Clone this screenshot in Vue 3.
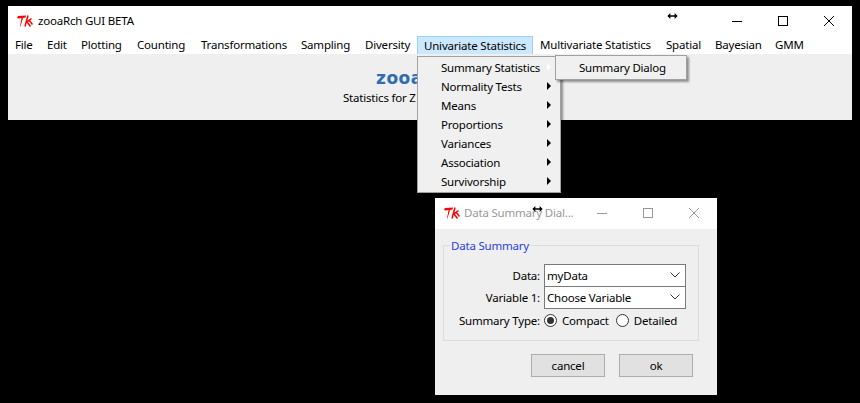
<script setup>
const menus = [
  { label: 'File', width: 32 },
  { label: 'Edit', width: 34 },
  { label: 'Plotting', width: 56 },
  { label: 'Counting', width: 64 },
  { label: 'Transformations', width: 100 },
  { label: 'Sampling', width: 64 },
  { label: 'Diversity', width: 59 },
  { label: 'Univariate Statistics', width: 116, active: true },
  { label: 'Multivariate Statistics', width: 126 },
  { label: 'Spatial', width: 49 },
  { label: 'Bayesian', width: 60 },
  { label: 'GMM', width: 40 }
]
const items = ['Summary Statistics', 'Normality Tests', 'Means', 'Proportions', 'Variances', 'Association', 'Survivorship']
</script>

<template>
  <div class="desktop">
    <section class="window main-window">
      <header class="titlebar">
        <svg class="tk" viewBox="0 0 16 12" width="16" height="12">
          <path d="M0 3L1 1L9 0.5L8.5 2.5L6 3L3.5 11.5L3 11.5L4.5 3L1.5 3.5Z" fill="#f00" />
          <path d="M11 0.5L8 11.5M14.5 3.5L10 7L13.5 11.5M12 5L15.5 9.5" stroke="#f00" stroke-width="1.5" fill="none" />
        </svg>
        <span class="title">zooaRch GUI BETA</span>
        <div class="controls">
          <svg width="12" height="12" viewBox="0 0 12 12"><path d="M1 6.5H11" stroke="#000" /></svg>
          <svg width="12" height="12" viewBox="0 0 12 12"><rect x="1.5" y="1.5" width="9" height="9" fill="none" stroke="#000" /></svg>
          <svg width="12" height="12" viewBox="0 0 12 12"><path d="M1 1L11 11M11 1L1 11" stroke="#000" /></svg>
        </div>
      </header>
      <nav class="menubar">
        <div
          v-for="m in menus"
          :key="m.label"
          class="menu"
          :class="{ active: m.active }"
          :style="{ width: m.width + 'px' }"
        >{{ m.label }}</div>
      </nav>
      <div class="content">
        <div class="logo">zooa</div>
        <div class="tagline">Statistics for Z</div>
      </div>
    </section>

    <div class="dropdown">
      <div v-for="(item, i) in items" :key="item" class="drop-item">
        <span>{{ item }}</span>
        <i class="arrow" :class="{ open: i === 0 }"></i>
      </div>
    </div>
    <div class="submenu">Summary Dialog</div>

    <svg class="cursor cursor-main" width="11" height="6" viewBox="0 0 12 7"><path d="M0 3.5L3.5 0V2.5H8.5V0L12 3.5L8.5 7V4.5H3.5V7Z" fill="#000" /></svg>

    <section class="window dialog">
      <header class="titlebar dialog-title">
        <svg class="tk" viewBox="0 0 16 12" width="16" height="12">
          <path d="M0 3L1 1L9 0.5L8.5 2.5L6 3L3.5 11.5L3 11.5L4.5 3L1.5 3.5Z" fill="#f00" />
          <path d="M11 0.5L8 11.5M14.5 3.5L10 7L13.5 11.5M12 5L15.5 9.5" stroke="#f00" stroke-width="1.5" fill="none" />
        </svg>
        <span class="title">Data Summary Dial...</span>
        <div class="controls dim">
          <svg width="12" height="12" viewBox="0 0 12 12"><path d="M1 6.5H11" stroke="#999" /></svg>
          <svg width="12" height="12" viewBox="0 0 12 12"><rect x="1.5" y="1.5" width="9" height="9" fill="none" stroke="#999" /></svg>
          <svg width="12" height="12" viewBox="0 0 12 12"><path d="M1 1L11 11M11 1L1 11" stroke="#999" /></svg>
        </div>
      </header>
      <div class="dialog-body">
        <fieldset class="group">
          <legend>Data Summary</legend>
          <div class="row">
            <label>Data:</label>
            <div class="combo"><span>myData</span><svg width="10" height="6" viewBox="0 0 10 6"><path d="M0.5 0.5L5 5L9.5 0.5" fill="none" stroke="#333" /></svg></div>
          </div>
          <div class="row">
            <label>Variable 1:</label>
            <div class="combo"><span>Choose Variable</span><svg width="10" height="6" viewBox="0 0 10 6"><path d="M0.5 0.5L5 5L9.5 0.5" fill="none" stroke="#333" /></svg></div>
          </div>
          <div class="row radios">
            <label>Summary Type:</label>
            <span class="radio on"></span><span class="radio-label">Compact</span>
            <span class="radio"></span><span class="radio-label">Detailed</span>
          </div>
        </fieldset>
        <div class="buttons">
          <button type="button">cancel</button>
          <button type="button">ok</button>
        </div>
      </div>
    </section>

    <svg class="cursor cursor-dialog" width="11" height="6" viewBox="0 0 12 7"><path d="M0 3.5L3.5 0V2.5H8.5V0L12 3.5L8.5 7V4.5H3.5V7Z" fill="#000" /></svg>
  </div>
</template>

<style>
html, body { margin: 0; background: #000; }
</style>

<style scoped>
.desktop {
  position: relative;
  width: 860px;
  height: 403px;
  background: #000;
  overflow: hidden;
  font-family: "Noto Sans", "Open Sans", sans-serif;
  font-size: 11.5px;
  letter-spacing: -0.2px;
  color: #000;
}
.window { position: absolute; background: #f0f0f0; display: flex; flex-direction: column; }
.main-window { left: 8px; top: 6px; width: 844px; height: 114px; }
.titlebar {
  height: 30px;
  flex: none;
  background: #fff;
  display: flex;
  align-items: center;
  padding: 0 0 1px 9px;
  box-sizing: border-box;
}
.tk { flex: none; margin-right: 5px; }
.title { position: relative; }
.controls { margin-left: auto; display: flex; gap: 34px; padding-right: 17px; }
.menubar { height: 18px; flex: none; background: #fff; display: flex; }
.menu {
  box-sizing: border-box;
  height: 19px;
  line-height: 18px;
  padding-left: 7px;
  white-space: nowrap;
  flex: none;
}
.menu.active { background: #cce8ff; border: 1px solid #99d1ff; padding-left: 6px; line-height: 17px; }
.content { flex: 1; background: #efefef; display: flex; flex-direction: column; padding-top: 16px; }
.logo {
  font-family: "DejaVu Sans", sans-serif;
  font-weight: bold;
  font-size: 17px;
  line-height: 17px;
  color: #2f6db0;
  letter-spacing: 0.5px;
  margin-left: 368px;
}
.tagline { line-height: 18px; margin-top: 2px; margin-left: 335px; }

.dropdown {
  position: absolute;
  left: 417px;
  top: 56px;
  width: 144px;
  height: 137px;
  box-sizing: border-box;
  background: #f0f0f0;
  border: 1px solid #a0a0a0;
  box-shadow: 2px 2px 2px rgba(0, 0, 0, 0.4);
  padding: 1px 0;
}
.drop-item { height: 19px; line-height: 19px; padding-left: 23px; position: relative; }
.arrow {
  position: absolute;
  left: 129px;
  top: 5px;
  width: 0;
  height: 0;
  border-left: 4px solid #000;
  border-top: 4px solid transparent;
  border-bottom: 4px solid transparent;
}
.arrow.open { border-left-color: #fff; }
.submenu {
  position: absolute;
  left: 555px;
  top: 55px;
  width: 132px;
  height: 25px;
  box-sizing: border-box;
  background: #f0f0f0;
  border: 1px solid #a0a0a0;
  box-shadow: 2px 2px 2px rgba(0, 0, 0, 0.4);
  padding-left: 23px;
  line-height: 23px;
}
.cursor { position: absolute; }
.cursor-main { left: 667px; top: 13px; }
.cursor-dialog { left: 532px; top: 206px; }

.dialog { left: 435px; top: 198px; width: 282px; height: 197px; }
.dialog-title { height: 31px; color: #999; padding-left: 9px; padding-bottom: 2px; }
.dialog-title .tk { margin-right: 4px; }
.dim { padding-right: 17px; }
.dialog-body { flex: 1; background: #efefef; padding: 10px 18px 0 8px; display: flex; flex-direction: column; }
.group {
  margin: 0;
  padding: 12px 0 0 0;
  height: 102px;
  box-sizing: border-box;
  border: 1px solid #dcdcdc;
  display: block;
  min-width: 0;
}
legend { color: #2a3fe0; padding: 0 1px; margin-left: 6px; line-height: 13px; }
.row { display: flex; align-items: center; height: 22px; }
.row label { width: 96px; margin-right: 4px; text-align: right; flex: none; }
.combo {
  box-sizing: border-box;
  width: 142px;
  height: 23px;
  border: 1px solid #7a7a7a;
  background: #fff;
  display: flex;
  align-items: center;
  justify-content: space-between;
  padding: 0 5px 0 2px;
  flex: none;
}
.radios { margin-top: 1px; }
.radio {
  flex: none;
  box-sizing: border-box;
  width: 13px;
  height: 13px;
  border: 1px solid #333;
  border-radius: 50%;
  background: #fff;
  position: relative;
}
.radio.on::after {
  content: "";
  position: absolute;
  left: 2px;
  top: 2px;
  width: 7px;
  height: 7px;
  border-radius: 50%;
  background: #333;
}
.radio-label { margin-left: 5px; margin-right: 7px; }
.buttons { display: flex; justify-content: flex-end; gap: 14px; margin-top: 13px; margin-right: 6px; }
button {
  width: 74px;
  height: 23px;
  padding: 0;
  box-sizing: border-box;
  background: #e1e1e1;
  border: 1px solid #adadad;
  font: inherit;
  letter-spacing: inherit;
  color: #000;
}
</style>
